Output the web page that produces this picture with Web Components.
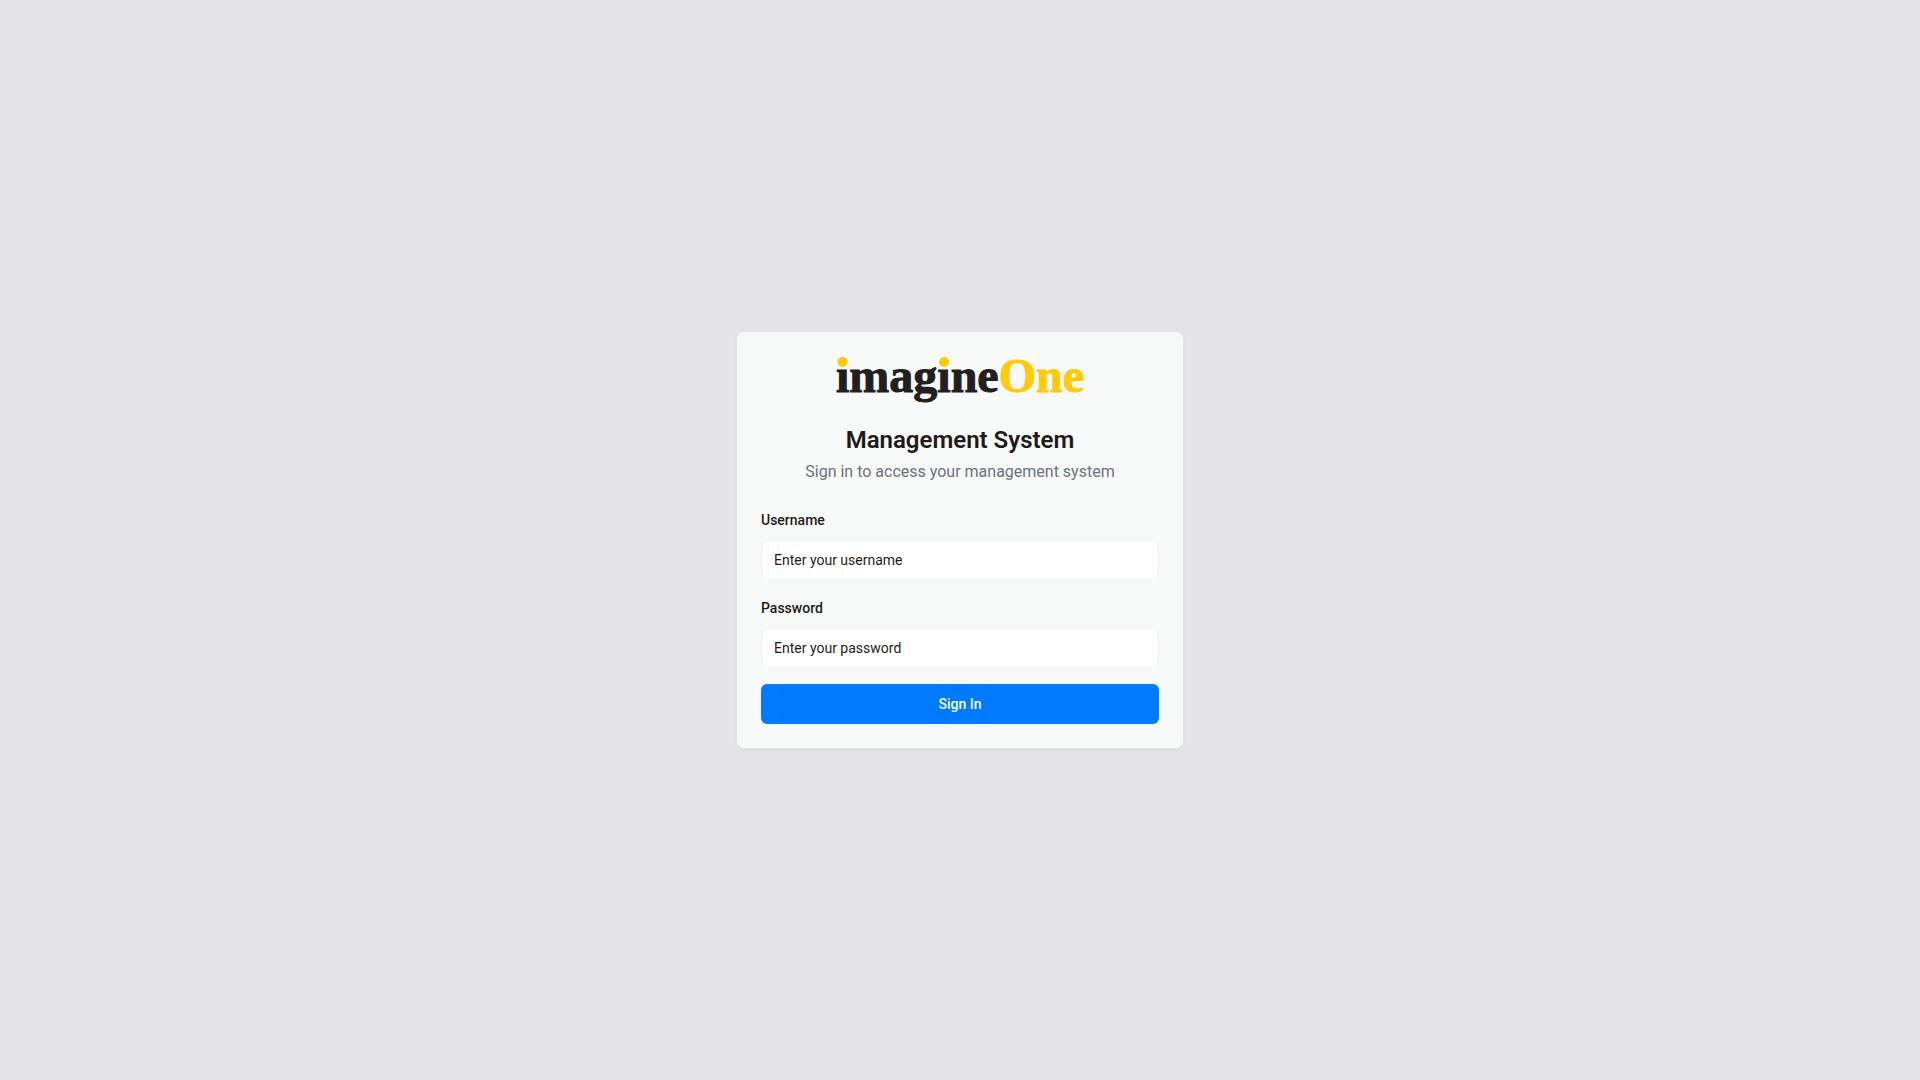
<!DOCTYPE html>
<html lang="en">
<head>
    <meta charset="UTF-8">
    <meta name="viewport" content="width=device-width, initial-scale=1">
    <title>imagineOne - Sign In</title>
    <style>
        body {
            margin: 0;
            background: #e4e4e6;
            color: #1f1b18;
            font: 16px/24px Roboto, sans-serif;
        }
    </style>
</head>
<body>
    <login-page>
        <login-card>
            <brand-logo slot="logo"></brand-logo>
            <span slot="title">Management System</span>
            <span slot="description">Sign in to access your management system</span>
            <login-form></login-form>
        </login-card>
    </login-page>

    <script>
        class LoginPage extends HTMLElement {
            constructor() {
                super();
                this.attachShadow({mode: 'open'}).innerHTML = `
                    <style>
                        :host {
                            display: flex;
                            align-items: center;
                            justify-content: center;
                            min-height: 100vh;
                            padding: 16px;
                            box-sizing: border-box;
                        }
                    </style>
                    <slot></slot>
                `;
            }
        }

        class BrandLogo extends HTMLElement {
            constructor() {
                super();
                this.attachShadow({mode: 'open'}).innerHTML = `
                    <style>
                        :host {
                            display: block;
                        }

                        svg {
                            display: block;
                            width: 250px;
                            height: 48px;
                            margin: 0 auto;
                            overflow: visible;
                        }

                        text {
                            font: bold 48px "Liberation Serif", serif;
                            fill: #231f20;
                            stroke: #231f20;
                            stroke-width: 1px;
                        }

                        .accent {
                            fill: #ffcb08;
                        }

                        tspan.accent {
                            stroke: #ffcb08;
                        }
                    </style>
                    <svg viewBox="0 0 250 48" role="img" aria-label="imagineOne">
                        <text x="1" y="36">imagine<tspan class="accent">One</tspan></text>
                        <!-- yellow dots over both letters i -->
                        <circle class="accent" cx="7.4" cy="6" r="5"/>
                        <circle class="accent" cx="109" cy="6" r="5"/>
                    </svg>
                `;
            }
        }

        class LoginCard extends HTMLElement {
            constructor() {
                super();
                this.attachShadow({mode: 'open'}).innerHTML = `
                    <style>
                        :host {
                            display: flex;
                            flex-direction: column;
                            gap: 24px;
                            width: 100%;
                            max-width: 448px;
                            box-sizing: border-box;
                            padding: 24px;
                            background: #f7f9f8;
                            border: 1px solid #e3e5ea;
                            border-radius: 8px;
                            box-shadow: 0 1px 2px rgba(0, 0, 0, 0.05);
                        }

                        header {
                            text-align: center;
                        }

                        h1 {
                            margin: 20px 0 4px;
                            font-size: 24px;
                            line-height: 32px;
                            font-weight: 600;
                        }

                        p {
                            margin: 0;
                            color: #6b7280;
                        }
                    </style>
                    <header>
                        <slot name="logo"></slot>
                        <h1><slot name="title"></slot></h1>
                        <p><slot name="description"></slot></p>
                    </header>
                    <slot></slot>
                `;
            }
        }

        class FormField extends HTMLElement {
            constructor() {
                super();
                this.attachShadow({mode: 'open'}).innerHTML = `
                    <style>
                        :host {
                            display: flex;
                            flex-direction: column;
                            gap: 8px;
                        }

                        label {
                            font-size: 14px;
                            line-height: 24px;
                            font-weight: 500;
                        }

                        input {
                            width: 100%;
                            height: 40px;
                            box-sizing: border-box;
                            padding: 8px 12px;
                            background: #fff;
                            border: 1px solid #f0f2f1;
                            border-radius: 6px;
                            color: inherit;
                            font: 14px/20px Roboto, sans-serif;
                        }

                        input::placeholder {
                            color: inherit;
                            opacity: 1;
                        }

                        input:focus {
                            outline: 2px solid #007bff;
                        }
                    </style>
                    <label for="field"><slot></slot></label>
                    <input id="field">
                `;
            }

            connectedCallback() {
                let input = this.shadowRoot.querySelector('input');
                input.type = this.getAttribute('type') || 'text';
                input.placeholder = this.getAttribute('placeholder') || '';
            }
        }

        class LoginForm extends HTMLElement {
            constructor() {
                super();
                this.attachShadow({mode: 'open'}).innerHTML = `
                    <style>
                        :host {
                            display: block;
                        }

                        form {
                            display: flex;
                            flex-direction: column;
                            gap: 16px;
                        }

                        button {
                            height: 40px;
                            padding: 8px 16px;
                            background: #007bff;
                            border: none;
                            border-radius: 6px;
                            color: #f8fafc;
                            font: 500 14px/20px Roboto, sans-serif;
                            cursor: pointer;
                        }

                        button:hover {
                            background: #1a88ff;
                        }
                    </style>
                    <form>
                        <form-field placeholder="Enter your username">Username</form-field>
                        <form-field type="password" placeholder="Enter your password">Password</form-field>
                        <button type="submit">Sign In</button>
                    </form>
                `;
                this.shadowRoot.querySelector('form').onsubmit = function (event) {
                    event.preventDefault();
                };
            }
        }

        window.customElements.define('login-page', LoginPage);
        window.customElements.define('brand-logo', BrandLogo);
        window.customElements.define('login-card', LoginCard);
        window.customElements.define('form-field', FormField);
        window.customElements.define('login-form', LoginForm);
    </script>
</body>
</html>
